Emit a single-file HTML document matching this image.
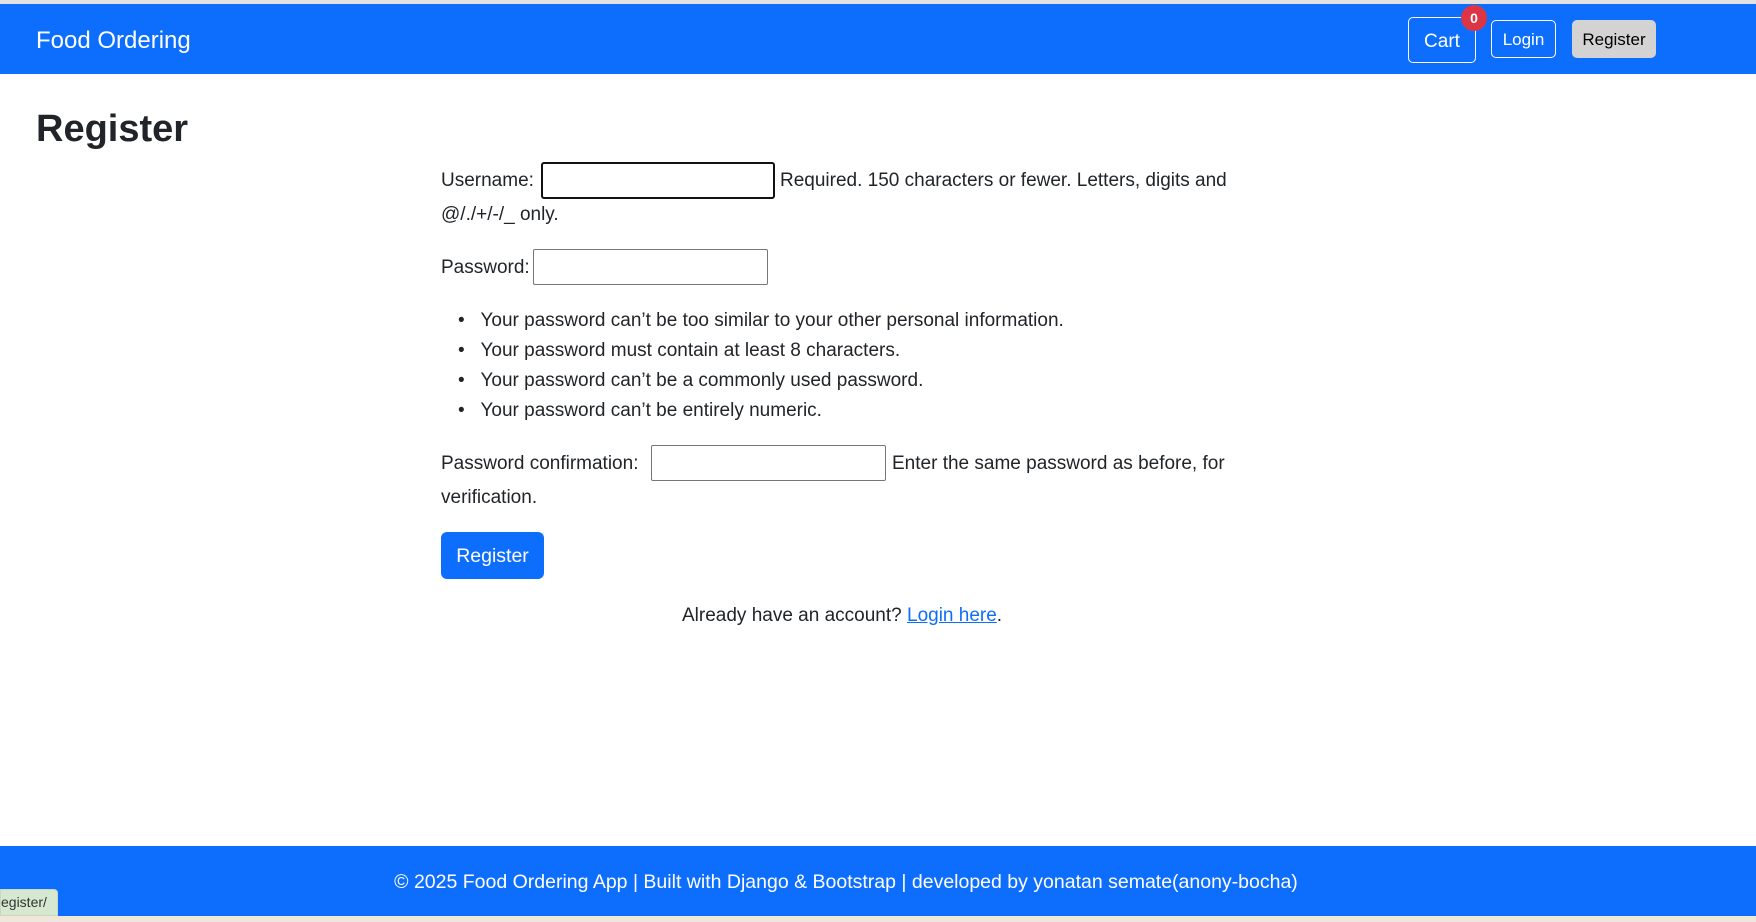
<!DOCTYPE html>
<html><head><meta charset="utf-8"><style>
*{box-sizing:border-box;margin:0;padding:0}
body{width:1756px;height:922px;overflow:hidden;background:#fff;font-family:"Liberation Sans",sans-serif;color:#212529;position:relative;font-size:19px}
.a{position:absolute;white-space:nowrap}
.nav{position:absolute;left:0;top:0;width:1756px;height:74px;background:#0d6efd;border-top:4px solid #e3e3e3}
.btn{position:absolute;border:1px solid #fff;border-radius:5px;color:#fff;display:flex;align-items:center;justify-content:center}
input{position:absolute;border:1px solid #767676;border-radius:2px;background:#fff}
.foot{position:absolute;left:0;top:846px;width:1756px;height:70px;background:#0d6efd;color:#fff;font-size:19.5px}
</style></head><body>
<div class="nav">
<div class="a" style="left:36px;top:23px;font-size:24px;color:#fff">Food Ordering</div>
<div class="btn" style="left:1408px;top:13px;width:68px;height:46px;font-size:19px;padding-top:4px">Cart</div>
<div class="a" style="left:1461px;top:1px;width:26px;height:26px;border-radius:13px;background:#dc3545;color:#fff;font-size:14px;font-weight:bold;text-align:center;line-height:26px">0</div>
<div class="btn" style="left:1491px;top:16px;width:65px;height:38px;font-size:17px;padding-top:2px">Login</div>
<div class="btn" style="left:1572px;top:16px;width:84px;height:38px;font-size:17px;background:#d3d3d3;border-color:#d3d3d3;color:#000;padding-top:2px">Register</div>
</div>
<div class="a" style="left:36px;top:108px;font-size:38px;font-weight:bold">Register</div>
<div class="a" style="left:441px;top:170px">Username:</div>
<input style="left:541px;top:162px;width:234px;height:37px;border:2px solid #111;border-radius:3px">
<div class="a" style="left:780px;top:170px">Required. 150 characters or fewer. Letters, digits and</div>
<div class="a" style="left:441px;top:204px">@/./+/-/_ only.</div>
<div class="a" style="left:441px;top:257px">Password:</div>
<input style="left:533px;top:249px;width:235px;height:36px">
<div class="a" style="left:458px;top:306px;line-height:30px">
• &nbsp;&nbsp;Your password can’t be too similar to your other personal information.<br>
• &nbsp;&nbsp;Your password must contain at least 8 characters.<br>
• &nbsp;&nbsp;Your password can’t be a commonly used password.<br>
• &nbsp;&nbsp;Your password can’t be entirely numeric.</div>
<div class="a" style="left:441px;top:453px">Password confirmation:</div>
<input style="left:651px;top:445px;width:235px;height:36px">
<div class="a" style="left:892px;top:453px">Enter the same password as before, for</div>
<div class="a" style="left:441px;top:487px">verification.</div>
<div class="a" style="left:441px;top:532px;width:103px;height:47px;background:#0d6efd;color:#fff;border-radius:6px;text-align:center;line-height:49px;font-size:19.5px">Register</div>
<div class="a" style="left:682px;top:605px">Already have an account? <span style="color:#0d6efd;text-decoration:underline">Login here</span>.</div>
<div class="foot"><div class="a" style="left:0;width:1692px;text-align:center;top:25px">© 2025 Food Ordering App | Built with Django &amp; Bootstrap | developed by yonatan semate(anony-bocha)</div></div>
<div class="a" style="left:0;top:889px;width:58px;height:27px;background:#d7e8d0;border:1px solid #c8d8c0;border-radius:0 4px 0 0;font-size:14px;color:#333;line-height:25px">egister/</div>
<div class="a" style="left:0;top:916px;width:1756px;height:6px;background:#efe6dc"></div>
</body></html>
